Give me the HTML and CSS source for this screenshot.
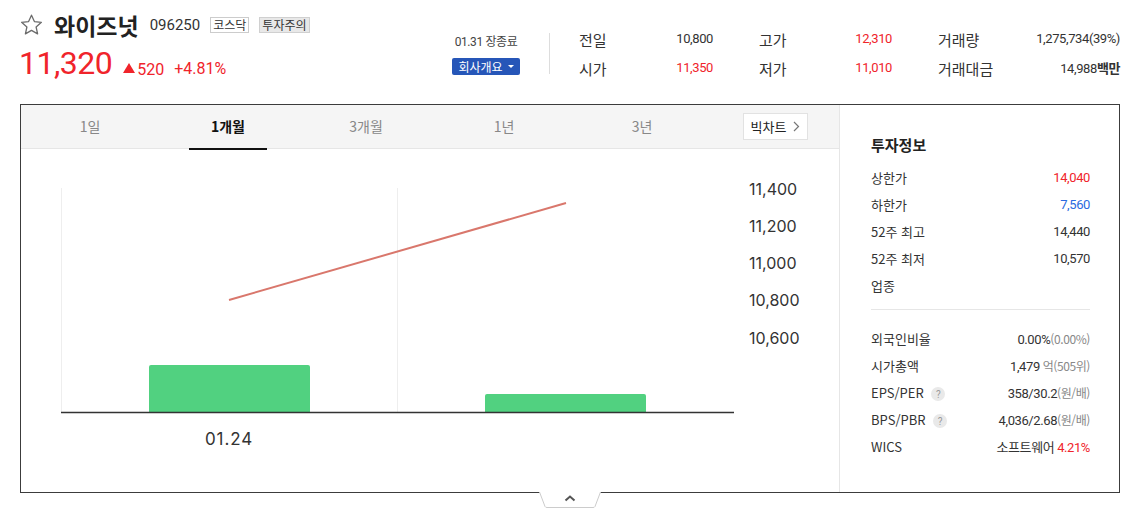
FILE: index.html
```html
<!DOCTYPE html>
<html lang="ko">
<head>
<meta charset="utf-8">
<link rel="stylesheet" href="styles.css">
</head>
<body>
<div class="wrap">
  <header class="top">
    <div class="ident">
      <div class="title-row">
        <svg class="star" width="23" height="22" viewBox="0 0 23 22"><path d="M11.5 1.2 L14.4 7.6 L21.4 8.3 L16.1 13 L17.6 19.9 L11.5 16.4 L5.4 19.9 L6.9 13 L1.6 8.3 L8.6 7.6 Z" fill="none" stroke="#6b6b6b" stroke-width="1.3" stroke-linejoin="round"/></svg>
        <h1 class="name">와이즈넛</h1>
        <span class="code">096250</span>
        <span class="badge">코스닥</span>
        <span class="badge warn">투자주의</span>
      </div>
      <div class="price-row">
        <span class="price">11,320</span>
        <span class="chg"><span class="tri"></span>520</span>
        <span class="pct">+4.81%</span>
      </div>
    </div>
    <div class="quote">
      <div class="status">
        <span class="date">01.31 장종료</span>
        <span class="btn-co">회사개요 <span class="caret"></span></span>
      </div>
      <div class="vdiv"></div>
      <div class="qgrid">
        <span class="k">전일</span><span class="v">10,800</span>
        <span class="k p">고가</span><span class="v up">12,310</span>
        <span class="k p">거래량</span><span class="v">1,275,734(39%)</span>
        <span class="k">시가</span><span class="v up">11,350</span>
        <span class="k p">저가</span><span class="v up">11,010</span>
        <span class="k p">거래대금</span><span class="v">14,988<b class="unit">백만</b></span>
      </div>
    </div>
  </header>

  <section class="box">
    <div class="chart-side">
      <nav class="tabs">
        <span class="tab">1일</span>
        <span class="tab on">1개월</span>
        <span class="tab">3개월</span>
        <span class="tab">1년</span>
        <span class="tab">3년</span>
        <span class="big">빅차트 <svg width="7" height="11" viewBox="0 0 7 11"><path d="M1 1 L5.5 5.5 L1 10" fill="none" stroke="#777" stroke-width="1.2"/></svg></span>
      </nav>
      <div class="plot">
        <svg width="818" height="343" viewBox="0 0 818 343">
          <line x1="40.5" y1="39" x2="40.5" y2="263" stroke="#eee" stroke-width="1"/>
          <line x1="376.5" y1="39" x2="376.5" y2="263" stroke="#eee" stroke-width="1"/>
          <path d="M128 263 V218 a2 2 0 0 1 2 -2 H287 a2 2 0 0 1 2 2 V263 Z" fill="#51d180"/>
          <path d="M464 263 V247 a2 2 0 0 1 2 -2 H623 a2 2 0 0 1 2 2 V263 Z" fill="#51d180"/>
          <line x1="40" y1="263.5" x2="713" y2="263.5" stroke="#333" stroke-width="1.3"/>
          <line x1="208" y1="151" x2="545" y2="54" stroke="#d9776c" stroke-width="2"/>
          <g class="ylab">
            <text x="728" y="46">11,400</text>
            <text x="728" y="83">11,200</text>
            <text x="728" y="120">11,000</text>
            <text x="728" y="157">10,800</text>
            <text x="728" y="195">10,600</text>
          </g>
          <text class="xlab" x="208" y="296" text-anchor="middle">01.24</text>
        </svg>
      </div>
    </div>
    <aside class="info">
      <h2 class="info-title">투자정보</h2>
      <ul class="rows">
        <li><span>상한가</span><span class="up">14,040</span></li>
        <li><span>하한가</span><span class="down">7,560</span></li>
        <li><span>52주 최고</span><span>14,440</span></li>
        <li><span>52주 최저</span><span>10,570</span></li>
        <li><span>업종</span><span></span></li>
      </ul>
      <ul class="rows second">
        <li><span>외국인비율</span><span>0.00%<em>(0.00%)</em></span></li>
        <li><span>시가총액</span><span>1,479 <em>억(505위)</em></span></li>
        <li><span>EPS/PER <i class="q">?</i></span><span>358/30.2<em>(원/배)</em></span></li>
        <li><span>BPS/PBR <i class="q">?</i></span><span>4,036/2.68<em>(원/배)</em></span></li>
        <li><span>WICS</span><span>소프트웨어 <b class="up norm">4.21%</b></span></li>
      </ul>
    </aside>
  </section>
  <div class="fold">
    <svg width="62" height="16" viewBox="0 0 62 16"><path d="M0.5 0 L6 14.5 Q6.5 15.5 8 15.5 H54 Q55.5 15.5 56 14.5 L61.5 0" fill="#fff" stroke="#ccc" stroke-width="1"/><path d="M26.5 8.5 L31 4.5 L35.5 8.5" fill="none" stroke="#555" stroke-width="2"/></svg>
  </div>
</div>
</body>
</html>
```

FILE: styles.css
```css
* { box-sizing: border-box; margin: 0; padding: 0; }
body {
  margin: 0;
  background: #fff;
  color: #222;
  font-family: Roboto, "Noto Sans CJK KR", sans-serif;
}
.wrap { width: 1100px; margin-left: 20px; }

.top { display: flex; justify-content: space-between; height: 104px; }
.ident { padding-top: 12px; }
.title-row { display: flex; align-items: center; height: 26px; }
.star { margin-right: 11px; margin-top: -1px; }
.name { font-size: 23px; font-weight: 700; color: #222; letter-spacing: 0; font-family: "Noto Sans CJK KR", sans-serif; line-height: 26px; }
.code { font-size: 15px; color: #333; margin-left: 11px; }
.badge {
  font-size: 12px; color: #333; border: 1px solid #ccc; background: #fff;
  height: 16px; line-height: 14px; padding: 0 2px; margin-left: 10px;
  font-family: "Noto Sans CJK KR", sans-serif;
}
.badge.warn { background: #e8e8e8; border-color: #d0d0d0; }
.price-row { display: flex; align-items: baseline; margin-top: 7px; color: #f0242b; }
.price { font-size: 32px; line-height: 36px; letter-spacing: -0.5px; margin-left: -1px; }
.chg { font-size: 16px; margin-left: 11px; display: inline-flex; align-items: center; }
.tri { width: 0; height: 0; border-left: 6px solid transparent; border-right: 6px solid transparent; border-bottom: 10px solid #f0242b; margin-right: 2px; position: relative; top: -1px; }
.pct { font-size: 16px; margin-left: 10px; }

.quote { display: flex; align-items: flex-start; padding-top: 33px; }
.status { display: flex; flex-direction: column; align-items: center; width: 68px; margin-right: 29px; }
.date { font-size: 12px; color: #444; line-height: 16px; margin-top: 1px; letter-spacing: -0.4px; }
.btn-co {
  margin-top: 8px; background: #2656b8; color: #fff; font-size: 12px;
  height: 17px; line-height: 17px; padding: 0 6px; border-radius: 2px;
  font-family: "Noto Sans CJK KR", sans-serif; display: inline-flex; align-items: center; white-space: nowrap;
}
.caret { width: 0; height: 0; border-left: 3px solid transparent; border-right: 3px solid transparent; border-top: 3px solid #fff; margin-left: 5px; }
.vdiv { width: 1px; height: 41px; background: #ddd; margin-right: 29px; }
.qgrid {
  display: grid;
  grid-template-columns: 60px 74px 106px 73px 125px 103px;
  grid-auto-rows: 29px;
  margin-top: -8px;
}
.qgrid .k { font-size: 15px; color: #333; line-height: 29px; font-family: "Noto Sans CJK KR", sans-serif; }
.qgrid .k.p { padding-left: 46px; }
.qgrid .v { font-size: 13px; color: #333; text-align: right; line-height: 27px; letter-spacing: -0.4px; }
.unit { font-weight: 700; font-family: "Noto Sans CJK KR", sans-serif; }
.up { color: #f0242b !important; }
.down { color: #2a6ae0 !important; }

.box {
  display: flex; border: 1px solid #3c3c3c; height: 389px;
}
.chart-side { width: 818px; display: flex; flex-direction: column; }
.tabs {
  display: flex; align-items: center; background: #f5f5f5; height: 44px;
  border-bottom: 1px solid #e6e6e6;
}
.tab {
  width: 138px; text-align: center; font-size: 14px; color: #888;
  height: 44px; line-height: 43px; font-family: "Noto Sans CJK KR", sans-serif;
}
.tab.on { color: #111; font-weight: 700; position: relative; }
.tab.on::after {
  content: ""; position: absolute; left: 30px; right: 30px; bottom: -1px; height: 2px; background: #111;
}
.big {
  margin-left: 32px; background: #fff; border: 1px solid #e2e2e2; height: 27px;
  width: 65px; display: inline-flex; align-items: center; justify-content: center; gap: 7px;
  font-size: 13px; color: #222; font-family: "Noto Sans CJK KR", sans-serif;
}
.plot { flex: 1; }
.plot svg { display: block; }
.ylab text { font-family: Inter, Roboto, sans-serif; font-size: 16px; fill: #333; }
.xlab { font-family: Inter, Roboto, sans-serif; font-size: 17px; fill: #333; letter-spacing: 0.9px; }

.info {
  flex: 1; border-left: 1px solid #e6e6e6; padding: 28px 29px 0 31px;
  font-family: "Noto Sans CJK KR", sans-serif;
}
.info-title { font-size: 15px; font-weight: 700; color: #222; line-height: 24px; margin-bottom: 7px; }
.rows { list-style: none; }
.rows li {
  display: flex; justify-content: space-between; align-items: center;
  height: 27px; font-size: 13px; color: #333;
}
.rows li span:last-child { font-family: Roboto, "Noto Sans CJK KR", sans-serif; letter-spacing: -0.4px; font-size: 13px; }
.rows:first-of-type { border-bottom: 1px solid #e6e6e6; padding-bottom: 10px; }
.rows.second { padding-top: 15px; }
.rows em { font-style: normal; color: #888; font-size: 12px; font-family: "Noto Sans CJK KR", sans-serif; }
.q {
  display: inline-flex; width: 14px; height: 14px; border-radius: 50%; background: #e9e9e9;
  color: #999; font-size: 10px; font-style: normal; align-items: center; justify-content: center;
  margin-left: 4px; vertical-align: middle; font-family: Roboto, sans-serif;
}
.norm { font-weight: 400; }
.fold { display: flex; justify-content: center; margin-top: -1px; }
.fold svg { display: block; }
```
